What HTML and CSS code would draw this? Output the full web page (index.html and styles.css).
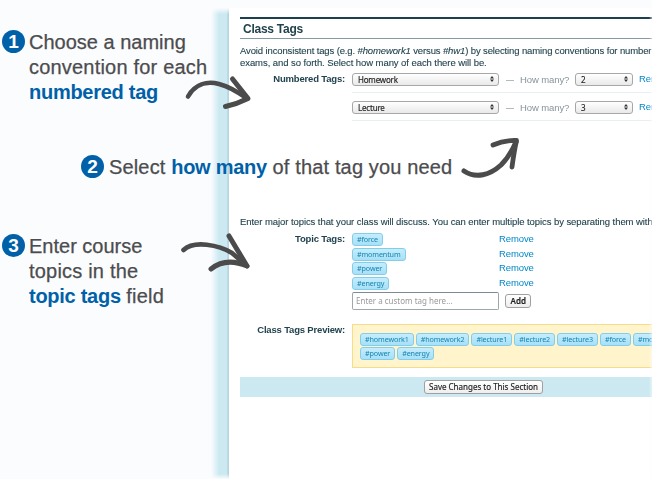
FILE: index.html
```html
<!DOCTYPE html>
<html lang="en">
<head>
<meta charset="utf-8">
<title>Class Tags</title>
<link rel="stylesheet" href="styles.css">
</head>
<body>
<div class="page">
  <aside class="steps">
    <div class="step step-one"><span class="num">1</span><p>Choose a naming<br><span class="loose">convention for each</span><br><b>numbered tag</b></p></div>
    <div class="step step-three"><span class="num">3</span><p>Enter course<br><span class="loose">topics in the</span><br><b>topic tags</b> <span class="loose">field</span></p></div>
  </aside>
  <div class="edge"></div>
  <main class="panel">
    <h1>Class Tags</h1>
    <p class="intro"><span class="tight">Avoid inconsistent tags (e.g. <i>#homework1</i> versus <i>#hw1</i>) by selecting naming conventions for number</span><br>exams, and so forth. Select how many of each there will be.</p>
    <section class="field numbered">
      <div class="label">Numbered Tags:</div>
      <div class="rows">
        <div class="row"><span class="select wide">Homework<svg viewBox="0 0 4 6"><path d="M2 0L4 2.4H0zM2 6L0 3.6H4z"/></svg></span><span class="dash">—</span><span class="many">How many?</span><span class="select">2<svg viewBox="0 0 4 6"><path d="M2 0L4 2.4H0zM2 6L0 3.6H4z"/></svg></span><a>Remove</a></div>
        <div class="row"><span class="select wide">Lecture<svg viewBox="0 0 4 6"><path d="M2 0L4 2.4H0zM2 6L0 3.6H4z"/></svg></span><span class="dash">—</span><span class="many">How many?</span><span class="select">3<svg viewBox="0 0 4 6"><path d="M2 0L4 2.4H0zM2 6L0 3.6H4z"/></svg></span><a>Remove</a></div>
      </div>
    </section>
    <p class="intro topics-intro">Enter major topics that your class will discuss. You can enter multiple topics by separating them with</p>
    <section class="field topics">
      <div class="label">Topic Tags:</div>
      <div class="rows">
        <div class="topic"><div><span class="tag">#force</span></div><a>Remove</a></div>
        <div class="topic"><div><span class="tag">#momentum</span></div><a>Remove</a></div>
        <div class="topic"><div><span class="tag">#power</span></div><a>Remove</a></div>
        <div class="topic"><div><span class="tag">#energy</span></div><a>Remove</a></div>
        <div class="custom"><span class="input">Enter a custom tag here...</span><span class="button add">Add</span></div>
      </div>
    </section>
    <section class="field preview">
      <div class="label">Class Tags Preview:</div>
      <div class="box">
        <div class="tags"><span class="tag">#homework1</span><span class="tag">#homework2</span><span class="tag">#lecture1</span><span class="tag">#lecture2</span><span class="tag">#lecture3</span><span class="tag">#force</span><span class="tag">#momentum</span></div>
        <div class="tags"><span class="tag">#power</span><span class="tag">#energy</span></div>
      </div>
    </section>
    <div class="save"><span class="button">Save Changes to This Section</span></div>
  </main>
  <div class="step step-two"><span class="num">2</span><p>Select <b>how many</b> of that tag you need</p></div>
  <svg class="arrows" viewBox="0 0 652 479">
    <g fill="none" stroke="#4b4b4b" stroke-linecap="round" stroke-linejoin="round">
      <path stroke-width="4.6" d="M188 96.500C195 84 207 81 219 84Q231 87 247 98.500"/>
      <path stroke-width="5" d="M232.500 79L248 98.500Q237 104 225.500 106.500"/>
      <path stroke-width="5" d="M464 171C476 179 490 175 501 165Q510 156 516 142"/>
      <path stroke-width="4.800" d="M493 145Q504 140 516.500 140.500Q514 152 512 167"/>
      <path stroke-width="4.600" d="M183.500 250C194 240 219 245 232 253L247 266"/>
      <path stroke-width="5" d="M229 236L247 266Q226 257 211 269"/>
    </g>
  </svg>
</div>
</body>
</html>
```

FILE: styles.css
```css
* { box-sizing: border-box; }
body { margin: 0; background: #fff; font-family: "Liberation Sans", sans-serif; }
p, h1 { margin: 0; }
.page { position: relative; display: flex; width: 652px; height: 479px; overflow: hidden; background: #fbfcfe; }
.steps { flex: none; width: 211px; padding-top: 30px; }
.step { display: flex; align-items: flex-start; gap: 4px; color: #4c4c4e; font-size: 20px; line-height: 25px; white-space: nowrap; -webkit-text-stroke: .25px currentColor; }
.step b { color: #0061a8; -webkit-text-stroke: 0; letter-spacing: -.27px; }
.loose { letter-spacing: .2px; }
.num { flex: none; width: 23px; height: 23px; border-radius: 50%; background: #0061a8; color: #fff; font-size: 19px; font-weight: bold; line-height: 23px; text-align: center; -webkit-text-stroke: 0; }
.steps .step { padding-left: 2px; }
.step-three { margin-top: 129px; }
.step-two { position: absolute; left: 81px; top: 155px; gap: 5px; letter-spacing: .15px; }
.edge { flex: none; width: 18px; height: 471px; margin-top: 8px; background: linear-gradient(90deg, #fbfcfe, #cce9f1 8px, #cce9f1 16px, #a9cedb 17px, #c6dde5); -webkit-mask-image: linear-gradient(transparent, #000 6px, #000 466px, transparent); }
.panel { flex: none; width: 423px; margin-top: 8px; padding: 9px 0 0 11px; background: #fff; color: #22434e; overflow: hidden; -webkit-mask-image: linear-gradient(90deg, #000 420px, rgba(0,0,0,.45)); }
h1 { height: 22px; padding-left: 3px; border-top: 2px solid #1c414c; border-bottom: 1px solid #8499a3; font-size: 12px; line-height: 21px; letter-spacing: -.25px; }
.intro { margin-top: 6px; font-size: 9.500px; line-height: 11.500px; letter-spacing: -.07px; white-space: nowrap; -webkit-text-stroke: .1px currentColor; }
.tight { letter-spacing: -.125px; }
.field { display: flex; }
.label { flex: none; width: 105px; margin-right: 7px; font-size: 9.500px; font-weight: bold; line-height: 12px; letter-spacing: -.18px; text-align: right; white-space: nowrap; }
.rows { flex: 1; min-width: 0; }
a { color: #0087c8; font-size: 9.500px; line-height: 12px; letter-spacing: -.1px; }
.numbered { margin-top: 5px; }
.row { display: flex; align-items: center; height: 20px; margin-bottom: 8px; padding-bottom: 7px; border-bottom: 1px solid #e9eef0; }
.select { display: flex; flex: none; align-items: center; justify-content: space-between; width: 58px; height: 13px; padding: 0 4px 0 5px; border: 1px solid #a7a7a7; border-radius: 3px; background: linear-gradient(#fff, #e9e9e9); color: #222; font: 8px/11px "Noto Sans", sans-serif; letter-spacing: -.2px; -webkit-text-stroke: .15px #222; }
.select.wide { width: 147px; }
.select svg { width: 4px; height: 6px; fill: #333; }
.dash, .many { flex: none; color: #87959b; font-size: 9.500px; letter-spacing: -.1px; }
.dash { width: 8px; margin-left: 7px; overflow: hidden; }
.many { width: 55px; margin-left: 6px; }
.row a { margin-left: 6px; }
.topics-intro { margin-top: 87px; }
.topics { margin-top: 5px; }
.topic { display: flex; align-items: center; height: 14.800px; }
.topic > div { display: flex; width: 147px; }
.topic a { padding-bottom: 2px; }
.topics .tag { margin-top: -1px; }
.tag { height: 13px; padding: 0 4px; border: 1px solid #82cdea; border-radius: 3px; background: linear-gradient(#c5edfd, #a7e0f7); color: #1584b0; font: 7.200px/11px "Noto Sans", sans-serif; letter-spacing: -.13px; white-space: nowrap; }
.custom { display: flex; align-items: center; }
.input { width: 147px; height: 18px; padding-left: 3px; border: 1px solid #9da8ad; border-top-color: #7e8a91; border-radius: 2px; color: #999; font: 8px/16px "Noto Sans", sans-serif; }
.button { height: 14px; padding: 0 4.500px; border: 1px solid #a0a0a0; border-radius: 3px; background: linear-gradient(#fff, #eee); color: #222; font: 8px/12px "Noto Sans", sans-serif; white-space: nowrap; -webkit-text-stroke: .15px #222; }
.add { width: 26px; margin-left: 6px; font-weight: 600; }
.preview { margin-top: 14px; }
.box { flex: none; width: 330px; height: 44px; padding: 8px 0 0 7px; border: 1px solid #f7dc8c; background: #fff4cc; }
.tags { display: flex; gap: 2px; height: 14px; }
.save { display: flex; align-items: center; justify-content: center; width: 487px; height: 20px; margin-top: 9px; background: #cce9f1; }
.arrows { position: absolute; inset: 0; width: 652px; height: 479px; }
```
